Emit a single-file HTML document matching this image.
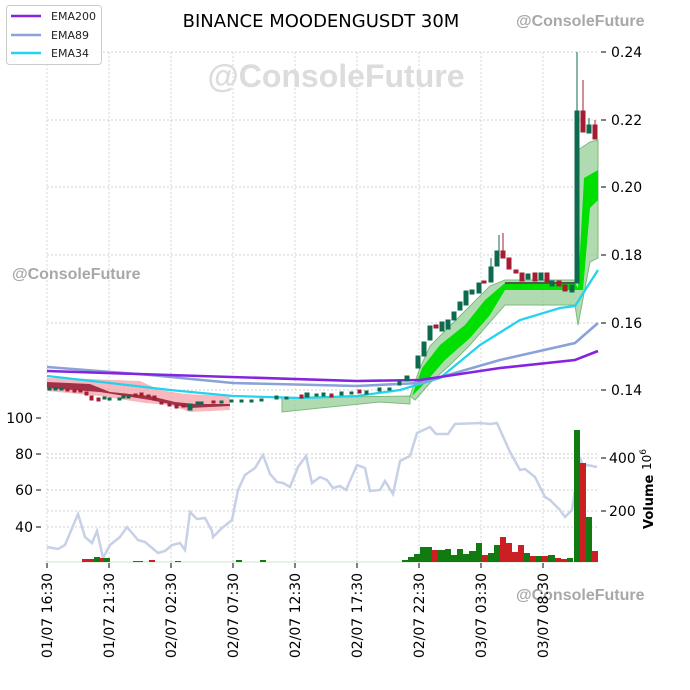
<!DOCTYPE html>
<html><head><meta charset="utf-8"><style>
html,body{margin:0;padding:0;background:#fff;width:690px;height:690px;overflow:hidden}
svg{display:block;font-family:"DejaVu Sans","Liberation Sans",sans-serif}
</style></head><body>
<svg width="690" height="690" viewBox="0 0 690 690" xmlns="http://www.w3.org/2000/svg">
<!-- grid -->
<g stroke="#c4c4c4" stroke-width="0.7" stroke-dasharray="2,2" fill="none">
<path d="M47 52V562M109 52V562M171 52V562M233 52V562M295 52V562M357 52V562M419 52V562M481 52V562M543 52V562"/>
<path d="M47 52H598M47 120H598M47 187H598M47 255H598M47 323H598M47 390H598"/>
<path d="M47 454H598M47 490H598M47 527H598M47 458H598M47 511H598"/>
</g>
<!-- watermarks -->
<text x="336" y="87" font-family="Liberation Sans,sans-serif" font-weight="bold" font-size="32" fill="#dcdcdc" text-anchor="middle">@ConsoleFuture</text>
<text x="516" y="26" font-family="Liberation Sans,sans-serif" font-weight="bold" font-size="16" fill="#a8a8a8">@ConsoleFuture</text>
<text x="12" y="279" font-family="Liberation Sans,sans-serif" font-weight="bold" font-size="16" fill="#a8a8a8">@ConsoleFuture</text>
<text x="516" y="600" font-family="Liberation Sans,sans-serif" font-weight="bold" font-size="16" fill="#a8a8a8">@ConsoleFuture</text>
<!-- title -->
<text x="321" y="27" font-size="18" fill="#000" text-anchor="middle">BINANCE MOODENGUSDT 30M</text>

<!-- RSI line -->
<polyline fill="none" stroke="#c6d0e6" stroke-width="2.5" points="47,547 58,549 65,545 78,514 85,537 92,543 97,531 103,558 110,545 120,537 127,527 138,540 145,542 158,553 165,551 172,545 180,543 185,550 190,512 197,519 205,518 212,531 213,537 222,528 232,520 238,490 245,475 255,468 263,455 270,474 277,482 283,483 290,487 298,467 306,456 312,483 320,477 327,480 333,488 340,486 346,490 357,465 365,468 370,491 380,490 385,481 393,494 400,461 410,456 417,433 430,427 436,434 448,434 455,424 480,423 490,424 497,423 510,452 520,470 525,469 535,477 545,497 550,500 560,510 565,517 572,510 580,457 583,468 587,465 597,467"/>

<!-- volume bars -->
<g fill="#cc1f24">
<rect x="82" y="559" width="12" height="3"/><rect x="98" y="558" width="6" height="4"/><rect x="133" y="561" width="10" height="1"/><rect x="149" y="560" width="6" height="2"/><rect x="175" y="561" width="6" height="1"/>
<rect x="432" y="550" width="6" height="12"/><rect x="482" y="555" width="6" height="7"/><rect x="500" y="537" width="6" height="25"/><rect x="506" y="543" width="6" height="19"/><rect x="512" y="552" width="6" height="10"/><rect x="518" y="545" width="6" height="17"/><rect x="530" y="556" width="6" height="6"/><rect x="542" y="556" width="6" height="6"/><rect x="555" y="558" width="6" height="4"/><rect x="561" y="559" width="6" height="3"/><rect x="580" y="463" width="6" height="99"/><rect x="592" y="551" width="6" height="11"/>
</g>
<g fill="#117a11">
<rect x="94" y="557" width="6" height="5"/><rect x="104" y="558" width="6" height="4"/><rect x="236" y="560" width="6" height="2"/><rect x="260" y="560" width="6" height="2"/>
<rect x="402" y="560" width="6" height="2"/><rect x="408" y="557" width="6" height="5"/><rect x="414" y="554" width="6" height="8"/><rect x="420" y="547" width="12" height="15"/><rect x="438" y="550" width="7" height="12"/><rect x="445" y="549" width="6" height="13"/><rect x="451" y="555" width="6" height="7"/><rect x="457" y="549" width="6" height="13"/><rect x="463" y="554" width="6" height="8"/><rect x="469" y="551" width="7" height="11"/><rect x="476" y="543" width="6" height="19"/><rect x="488" y="553" width="6" height="9"/><rect x="494" y="545" width="6" height="17"/><rect x="524" y="553" width="6" height="9"/><rect x="536" y="556" width="6" height="6"/><rect x="548" y="555" width="7" height="7"/><rect x="567" y="558" width="6" height="4"/><rect x="574" y="430" width="6" height="132"/><rect x="586" y="517" width="6" height="45"/>
</g>
<path d="M47 562H598" stroke="#117a11" stroke-width="0.6" opacity=".4"/>

<!-- clouds -->
<path d="M47 378 L90 379 L140 381 L160 390 L185 394 L230 396 L230 410 L190 412 L170 405 L145 403 L100 396 L47 391Z" fill="#f4a0a8" opacity=".75"/>
<path d="M47 382 L90 384 L110 392 L150 396 L175 402 L195 404 L230 404 L230 406 L190 408 L150 400 L100 392 L47 388Z" fill="#8b0f2a" opacity=".8"/>
<path d="M282 398 L410 396 L410 404 L380 402 L320 408 L282 412Z" fill="#8fcc8f" opacity=".7" stroke="#4a9e4a"/>
<path d="M410 396 L420 368 L430 346 L450 326 L470 306 L490 286 L505 280 L575 280 L578 150 L590 142 L598 140 L598 258 L590 262 L578 325 L575 305 L505 305 L490 322 L470 345 L450 365 L430 383 L415 400Z" fill="#8fcc8f" opacity=".7" stroke="#4a9e4a"/>
<path d="M412 396 L422 368 L440 345 L465 325 L485 300 L505 283 L575 283 L578 288 L584 178 L598 170 L598 200 L590 208 L583 290 L505 290 L490 315 L470 338 L445 360 L425 383 Z" fill="#00e000"/>
<path d="M505 283 L575 283" stroke="#555" stroke-width="2"/>

<!-- EMAs -->
<polyline fill="none" stroke="#22d3ee" stroke-width="2.3" points="47,376 110,383 170,390 233,396 300,398 357,396 400,390 440,378 480,345 520,320 560,308 575,306 598,270"/>
<polyline fill="none" stroke="#8aa2d8" stroke-width="2.6" points="47,367 150,375 233,383 357,386 420,383 500,360 575,343 598,323"/>
<polyline fill="none" stroke="#8524e0" stroke-width="2.6" points="47,371 200,376 357,381 420,380 500,368 575,360 598,351"/>

<!-- candles -->
<g stroke-width="1">
<g fill="#0c6b4e" stroke="#0c6b4e">
<rect x="48" y="388" width="3" height="2"/><rect x="54" y="388" width="3" height="2"/><rect x="60" y="388" width="3" height="2"/><rect x="103" y="397" width="3" height="2"/><rect x="108" y="398" width="3" height="2"/><rect x="118" y="398" width="3" height="2"/><rect x="122" y="396" width="3" height="2"/><rect x="127" y="396" width="3" height="2"/><rect x="188" y="404" width="4" height="6"/><rect x="196" y="402" width="3" height="2"/><rect x="200" y="402" width="3" height="2"/><rect x="220" y="401" width="3" height="2"/><rect x="230" y="400" width="3" height="2"/><rect x="240" y="400" width="3" height="2"/><rect x="250" y="400" width="3" height="2"/><rect x="260" y="399" width="3" height="2"/><rect x="275" y="396" width="3" height="3"/><rect x="285" y="397" width="3" height="2"/><rect x="305" y="393" width="4" height="4"/><rect x="315" y="394" width="3" height="2"/><rect x="322" y="393" width="3" height="3"/><rect x="340" y="392" width="3" height="3"/><rect x="350" y="392" width="3" height="2"/><rect x="365" y="391" width="3" height="3"/><rect x="378" y="388" width="3" height="3"/><rect x="388" y="388" width="3" height="2"/><rect x="398" y="381" width="3" height="4"/><rect x="405" y="376" width="4" height="5"/>
<rect x="416" y="356" width="4" height="12"/><rect x="422" y="342" width="4" height="14"/><rect x="428" y="326" width="4" height="14"/><rect x="440" y="322" width="4" height="9"/><rect x="446" y="320" width="4" height="9"/><rect x="452" y="312" width="4" height="8"/><rect x="458" y="302" width="4" height="8"/><rect x="464" y="291" width="4" height="14"/><rect x="470" y="290" width="4" height="4"/><rect x="477" y="283" width="4" height="10"/><rect x="489" y="267" width="4" height="15"/><rect x="495" y="251" width="4" height="15"/><rect x="526" y="274" width="4" height="5"/><rect x="539" y="273" width="4" height="7"/><rect x="550" y="281" width="4" height="5"/><rect x="570" y="285" width="4" height="7"/>
<rect x="575" y="111" width="4" height="172"/><rect x="587" y="125" width="4" height="8"/>
<path d="M577 52V111M589 118V125M499 235V251M491 258V267" fill="none"/>
</g>
<g fill="#a61c30" stroke="#a61c30">
<rect x="66" y="389" width="3" height="2"/><rect x="73" y="390" width="3" height="2"/><rect x="79" y="390" width="3" height="2"/><rect x="85" y="392" width="3" height="3"/><rect x="90" y="396" width="3" height="4"/><rect x="97" y="398" width="3" height="3"/><rect x="134" y="394" width="3" height="2"/><rect x="140" y="393" width="3" height="3"/><rect x="147" y="395" width="3" height="2"/><rect x="153" y="396" width="3" height="4"/><rect x="160" y="402" width="3" height="2"/><rect x="168" y="404" width="3" height="2"/><rect x="175" y="405" width="3" height="3"/><rect x="182" y="405" width="3" height="2"/><rect x="212" y="401" width="3" height="2"/><rect x="300" y="395" width="3" height="3"/><rect x="330" y="394" width="3" height="3"/><rect x="358" y="390" width="3" height="3"/>
<rect x="434" y="325" width="4" height="3"/><rect x="482" y="281" width="4" height="2"/><rect x="501" y="251" width="4" height="7"/><rect x="507" y="258" width="4" height="11"/><rect x="514" y="270" width="4" height="3"/><rect x="520" y="273" width="4" height="8"/><rect x="533" y="273" width="4" height="8"/><rect x="545" y="273" width="4" height="9"/><rect x="557" y="281" width="4" height="5"/><rect x="563" y="285" width="4" height="6"/>
<rect x="581" y="111" width="4" height="21"/><rect x="593" y="125" width="4" height="14"/>
<path d="M583 80V111M595 120V125M503 233V251" fill="none"/>
</g>
</g>

<!-- right axis -->
<g font-size="14" fill="#000">
<g stroke="#000"><path d="M601 52h5M601 120h5M601 187h5M601 255h5M601 323h5M601 390h5M601 458h5M601 511h5M36 418h5M36 454h5M36 490h5M36 527h5"/></g>
<text x="611" y="57">0.24</text><text x="611" y="125">0.22</text><text x="611" y="192">0.20</text><text x="611" y="260">0.18</text><text x="611" y="328">0.16</text><text x="611" y="395">0.14</text>
<text x="609" y="463">400</text><text x="609" y="516">200</text>
<text x="33" y="423" text-anchor="end">100</text><text x="33" y="459" text-anchor="end">80</text><text x="33" y="495" text-anchor="end">60</text><text x="33" y="532" text-anchor="end">40</text>
<text transform="translate(653,529) rotate(-90)" font-weight="bold" font-size="13">Volume</text>
<text transform="translate(651,470) rotate(-90)" font-size="12">10<tspan dy="-5" font-size="9">6</tspan></text>
</g>
<!-- x labels -->
<g font-size="14" fill="#000" text-anchor="end">
<g stroke="#000"><path d="M47 563v5M109 563v5M171 563v5M233 563v5M295 563v5M357 563v5M419 563v5M481 563v5M543 563v5"/></g>
<text transform="translate(52,573) rotate(-90)">01/07 16:30</text>
<text transform="translate(114,573) rotate(-90)">01/07 21:30</text>
<text transform="translate(176,573) rotate(-90)">02/07 02:30</text>
<text transform="translate(238,573) rotate(-90)">02/07 07:30</text>
<text transform="translate(300,573) rotate(-90)">02/07 12:30</text>
<text transform="translate(362,573) rotate(-90)">02/07 17:30</text>
<text transform="translate(424,573) rotate(-90)">02/07 22:30</text>
<text transform="translate(486,573) rotate(-90)">03/07 03:30</text>
<text transform="translate(548,573) rotate(-90)">03/07 08:30</text>
</g>
<!-- legend -->
<rect x="6.5" y="5.5" width="95" height="59" rx="3" fill="#fff" fill-opacity=".85" stroke="#ccc"/>
<g stroke-width="2.5"><path d="M11 16h30" stroke="#8524e0"/><path d="M11 35h30" stroke="#8aa2d8"/><path d="M11 53h30" stroke="#22d3ee"/></g>
<g font-size="11" fill="#222"><text x="51" y="20">EMA200</text><text x="51" y="39">EMA89</text><text x="51" y="57">EMA34</text></g>
</svg>
</body></html>
